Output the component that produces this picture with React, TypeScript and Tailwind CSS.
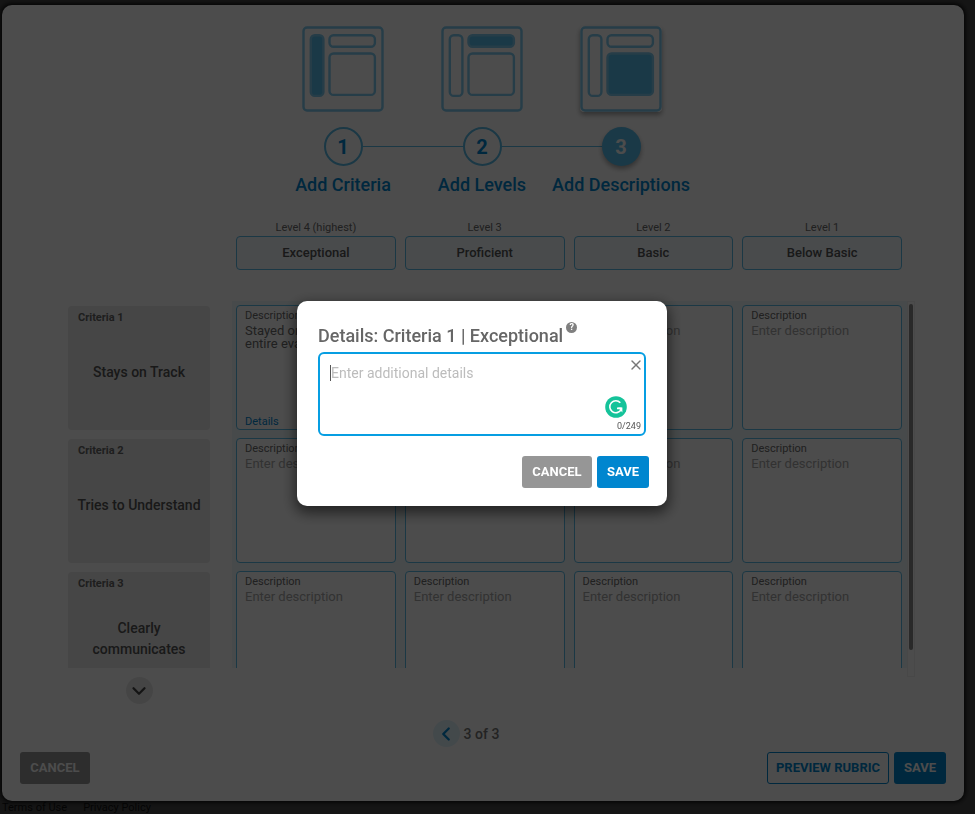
import { useState } from "react";
import { ChevronDown, ChevronLeft, X } from "lucide-react";

type StepPart = "criteria" | "levels" | "descriptions";

const steps: { part: StepPart; label: string }[] = [
  { part: "criteria", label: "Add Criteria" },
  { part: "levels", label: "Add Levels" },
  { part: "descriptions", label: "Add Descriptions" },
];

const levels = [
  { caption: "Level 4 (highest)", name: "Exceptional" },
  { caption: "Level 3", name: "Proficient" },
  { caption: "Level 2", name: "Basic" },
  { caption: "Level 1", name: "Below Basic" },
];

const criteria = [
  {
    name: "Stays on Track",
    descriptions: ["Stayed on track for the entire evaluation", "", "", ""],
  },
  { name: "Tries to Understand", descriptions: ["", "", "", ""] },
  { name: "Clearly communicates", descriptions: ["", "", "", ""] },
];

const MAX_DETAILS = 249;

function StepIcon({ part }: { part: StepPart }) {
  const fill = (name: StepPart) => (part === name ? "#58bfee" : "none");

  return (
    <svg
      width="82"
      height="86"
      viewBox="0 0 82 86"
      fill="none"
      stroke="#80ccf0"
      strokeWidth="2.4"
      className={part === "descriptions" ? "rounded bg-white shadow-[0_3px_5px_rgba(0,0,0,0.35)]" : ""}
      aria-hidden="true"
    >
      <rect x="1.5" y="1.5" width="79" height="83" rx="3.5" />
      <rect x="8.8" y="9.3" width="12.6" height="60.6" rx="4" fill={fill("criteria")} />
      <rect x="27.5" y="9.3" width="45.4" height="11.4" rx="4" fill={fill("levels")} />
      <rect x="27.5" y="27.5" width="45.4" height="41.4" rx="4" fill={fill("descriptions")} />
    </svg>
  );
}

function Stepper() {
  return (
    <ol className="flex justify-center pt-[21px] pr-[2px]">
      {steps.map((step, index) => {
        const active = index === steps.length - 1;

        return (
          <li key={step.part} className="flex w-[139px] flex-col items-center">
            <StepIcon part={step.part} />
            <div className="mt-[15px] flex w-full items-center">
              <span className={`h-px flex-1 ${index === 0 ? "" : "bg-[#5abce8]"}`} />
              <span
                className={`flex size-[39px] items-center justify-center rounded-full text-xl font-bold ${
                  active
                    ? "bg-[#58bfee] text-white shadow-[0_3px_5px_rgba(0,0,0,0.35)]"
                    : "border-2 border-[#5abce8] text-[#0086cf]"
                }`}
              >
                {index + 1}
              </span>
              <span className={`h-px flex-1 ${active ? "" : "bg-[#5abce8]"}`} />
            </div>
            <span className="mt-2 text-lg leading-[22px] font-medium whitespace-nowrap text-[#0086cf]">
              {step.label}
            </span>
          </li>
        );
      })}
    </ol>
  );
}

function LevelHeader() {
  return (
    <div className="mt-6 grid grid-cols-4 gap-[9px] pr-[13px] pl-[168px]">
      {levels.map((level) => (
        <label key={level.caption} className="flex flex-col text-center text-[11px] leading-4 text-[#6b6b6b]">
          {level.caption}
          <input
            defaultValue={level.name}
            className="h-[34px] w-full rounded border border-[#5abce8] bg-[#f4faff] pb-[2px] text-center text-[13px] font-medium text-[#555]"
          />
        </label>
      ))}
    </div>
  );
}

function DescriptionCard({ id, value }: { id: string; value: string }) {
  return (
    <div className="flex h-[125px] flex-col rounded border border-[#5abce8] bg-white px-2 pt-[3px]">
      <label htmlFor={id} className="text-[11px] leading-[13px] text-[#6b6b6b]">
        Description
      </label>
      <textarea
        id={id}
        defaultValue={value}
        placeholder="Enter description"
        className="mt-[2px] w-full flex-1 resize-none overflow-hidden text-[13px] leading-[13px] text-[#6b6b6b] outline-none placeholder:text-[#a8a8a8]"
      />
      {value ? (
        <a href="#details" className="self-start text-[11px] leading-[14px] text-[#0086cf]">
          Details
        </a>
      ) : null}
    </div>
  );
}

function RubricGrid() {
  return (
    <div className="mt-[31px] flex">
      <div className="flex w-[142px] flex-col items-center">
        <div className="h-[367px] w-full overflow-hidden pt-[5px]">
          <div className="flex flex-col gap-[9px]">
            {criteria.map((item, index) => (
              <div key={item.name} className="flex h-[124px] flex-col rounded bg-[#eaeaea] px-1 pt-1 text-[#666]">
                <span className="px-[6px] text-[11px] leading-4 font-bold">Criteria {index + 1}</span>
                <span className="flex flex-1 items-center justify-center pb-[11px] text-center text-sm leading-[21px] font-medium text-[#555]">
                  <span className={index === 2 ? "w-24" : ""}>{item.name}</span>
                </span>
              </div>
            ))}
          </div>
        </div>
        <button
          type="button"
          aria-label="Scroll to more criteria"
          className="mt-[9px] flex size-[27px] items-center justify-center rounded-full bg-[#e8e8e8] text-[#444]"
        >
          <ChevronDown size={22} strokeWidth={2.5} />
        </button>
      </div>

      <div className="ml-[22px] h-[367px] flex-1 overflow-hidden bg-[#eef9fb] py-1 pr-[5px] pl-1">
        <div className="grid grid-cols-4 gap-x-[9px] gap-y-2">
          {criteria.map((item, row) =>
            item.descriptions.map((text, column) => (
              <DescriptionCard key={`${row}-${column}`} id={`description-${row}-${column}`} value={text} />
            )),
          )}
        </div>
      </div>

      <div className="flex h-[376px] w-2 justify-center border border-[#f2f2f2] pt-[2px]">
        <div className="h-[346px] w-1 rounded-full bg-[#8a8a8a]" />
      </div>
    </div>
  );
}

function DetailsDialog() {
  const [details, setDetails] = useState("");

  return (
    <div className="fixed inset-0 flex items-center justify-center bg-black/70 pr-[11px] pb-[7px]">
      <div
        role="dialog"
        aria-labelledby="details-title"
        className="w-[370px] rounded-[10px] bg-white pt-6 pr-[18px] pb-[18px] pl-[21px] shadow-[0_5px_14px_2px_rgba(0,0,0,0.55)]"
      >
        <div className="flex gap-[3px]">
          <h2 id="details-title" className="text-lg leading-[22px] font-medium text-[#666]">
            Details: Criteria 1 | Exceptional
          </h2>
          <span className="-mt-[3px] flex size-[11px] items-center justify-center rounded-full bg-[#808080] text-[9px] font-bold text-white">
            ?
          </span>
        </div>

        <div className="relative mt-[5px] mr-[3px] flex">
          <textarea
            aria-labelledby="details-title"
            value={details}
            maxLength={MAX_DETAILS}
            onChange={(event) => setDetails(event.target.value)}
            placeholder="Enter additional details"
            className="h-[84px] w-full resize-none rounded-md border-2 border-[#069ee2] px-[11px] py-[9px] text-sm leading-5 text-[#555] outline-none placeholder:text-[#bcbcbc]"
          />
          <span className="absolute top-[13px] left-3 h-4 w-px bg-[#555]" />
          <button type="button" aria-label="Clear" className="absolute top-[5px] right-[2px] text-[#777]">
            <X size={16} strokeWidth={2} />
          </button>
          <svg
            width="22"
            height="22"
            viewBox="0 0 22 22"
            className="absolute right-[19px] bottom-[18px]"
            aria-hidden="true"
          >
            <circle cx="11" cy="11" r="10.8" fill="#15c39a" />
            <path
              d="M15.3 6.8A6 6 0 1 0 16 13.8M12 12.4H16.6"
              fill="none"
              stroke="#fff"
              strokeWidth="1.6"
            />
            <path d="M13 11.6H17.4V16.6Z" fill="#fff" />
          </svg>
          <span className="absolute right-[5px] bottom-1 text-[9px] leading-3 text-[#555]">
            {details.length}/{MAX_DETAILS}
          </span>
        </div>

        <div className="mt-5 flex justify-end gap-[5px]">
          <button type="button" className="h-8 w-[70px] rounded-[3px] bg-[#969696] text-[13px] font-bold text-white">
            CANCEL
          </button>
          <button type="button" className="h-8 w-[52px] rounded-[3px] bg-[#0086cf] text-[13px] font-bold text-white">
            SAVE
          </button>
        </div>
      </div>
    </div>
  );
}

export default function App() {
  return (
    <div className="flex min-h-screen flex-col bg-[#484848] pt-[5px] pr-[11px] pl-[2px] font-[Roboto,sans-serif]">
      <main className="flex flex-1 flex-col rounded-[10px] bg-white shadow-[0_0_5px_1px_#000]">
        <Stepper />
        <div className="pr-[49px] pl-[66px]">
          <LevelHeader />
          <RubricGrid />
        </div>

        <div className="mt-4 flex items-center justify-center gap-1 pr-[34px]">
          <button
            type="button"
            aria-label="Previous step"
            className="flex size-[27px] items-center justify-center rounded-full bg-[#e2f3fb] text-[#0086cf]"
          >
            <ChevronLeft size={22} strokeWidth={2.5} />
          </button>
          <span className="text-sm font-medium text-[#777]">3 of 3</span>
        </div>

        <footer className="mt-auto flex gap-[5px] pr-[18px] pb-[17px] pl-[18px]">
          <button
            type="button"
            className="mr-auto h-8 w-[70px] rounded-[3px] bg-[#969696] text-[13px] font-bold text-white"
          >
            CANCEL
          </button>
          <button
            type="button"
            className="h-8 w-[122px] rounded-[3px] border border-[#0086cf] text-[13px] font-bold text-[#0086cf]"
          >
            PREVIEW RUBRIC
          </button>
          <button type="button" className="h-8 w-[52px] rounded-[3px] bg-[#0086cf] text-[13px] font-bold text-white">
            SAVE
          </button>
        </footer>
      </main>

      <div className="flex gap-4 text-[11px] leading-[13px] text-[#101010]">
        <a href="#terms">Terms of Use</a>
        <a href="#privacy">Privacy Policy</a>
      </div>

      <DetailsDialog />
    </div>
  );
}
